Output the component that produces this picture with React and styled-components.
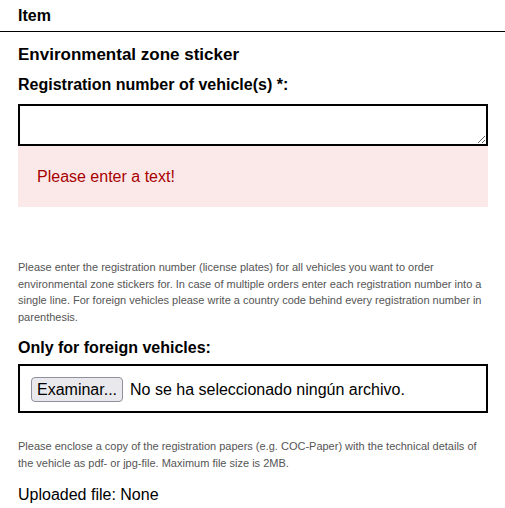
import React from "react"
import styled, { createGlobalStyle } from "styled-components"

const GlobalStyle = createGlobalStyle`
  body {
    margin: 0;
    background: #fff;
    font-family: "Liberation Sans", Arial, sans-serif;
    color: #000;
  }
`

const Header = styled.div`
  height: 31px;
  padding: 0 18px;
  display: flex;
  align-items: center;
  border-bottom: 1px solid #000;
  font-size: 16px;
  font-weight: bold;
`

const Section = styled.div`
  padding: 0 17px 0 18px;
  display: flex;
  flex-direction: column;
`

const Title = styled.h3`
  margin: ${(p) => p.top}px 0 0;
  font-size: ${(p) => p.size || 16}px;
  line-height: 20px;
  font-weight: bold;
`

const TextArea = styled.textarea`
  display: block;
  margin-top: 9px;
  box-sizing: border-box;
  width: 100%;
  height: 42px;
  border: 2px solid #000;
  border-radius: 0;
  padding: 4px;
  font: 16px "Liberation Sans", Arial, sans-serif;
  outline: none;
`

const ErrorBox = styled.div`
  background: #fbe9ea;
  color: #a80000;
  font-size: 16px;
  line-height: 18px;
  padding: 22px 19px 21px;
`

const Help = styled.p`
  margin: ${(p) => p.top}px 0 0;
  font-size: 11px;
  line-height: 16.5px;
  color: #555;
`

const FileBox = styled.div`
  margin-top: 6px;
  box-sizing: border-box;
  height: 49px;
  border: 2px solid #000;
  padding: 2px 11px 0;
  display: flex;
  align-items: center;
  font-size: 16px;
`

const FileButton = styled.button`
  height: 25px;
  padding: 0 5px;
  margin-right: 7px;
  background: #e9e9ed;
  border: 1px solid #8f8f9d;
  border-radius: 4px;
  font: 16px "Liberation Sans", Arial, sans-serif;
  color: #000;
`

const Uploaded = styled.div`
  margin-top: 15px;
  font-size: 16px;
  line-height: 18px;
`

export default function App() {
  return (
    <>
      <GlobalStyle />
      <Header>Item</Header>
      <Section>
        <Title top={13} size={17}>Environmental zone sticker</Title>
        <Title top={10}>Registration number of vehicle(s) *:</Title>
        <TextArea />
        <ErrorBox>Please enter a text!</ErrorBox>
        <Help top={52}>
          Please enter the registration number (license plates) for all vehicles you want to order
          environmental zone stickers for. In case of multiple orders enter each registration number into a
          single line. For foreign vehicles please write a country code behind every registration number in
          parenthesis.
        </Help>
        <Title top={13}>Only for foreign vehicles:</Title>
        <FileBox>
          <FileButton>Examinar...</FileButton>
          No se ha seleccionado ningún archivo.
        </FileBox>
        <Help top={25}>
          Please enclose a copy of the registration papers (e.g. COC-Paper) with the technical details of
          the vehicle as pdf- or jpg-file. Maximum file size is 2MB.
        </Help>
        <Uploaded>Uploaded file: None</Uploaded>
      </Section>
    </>
  )
}
